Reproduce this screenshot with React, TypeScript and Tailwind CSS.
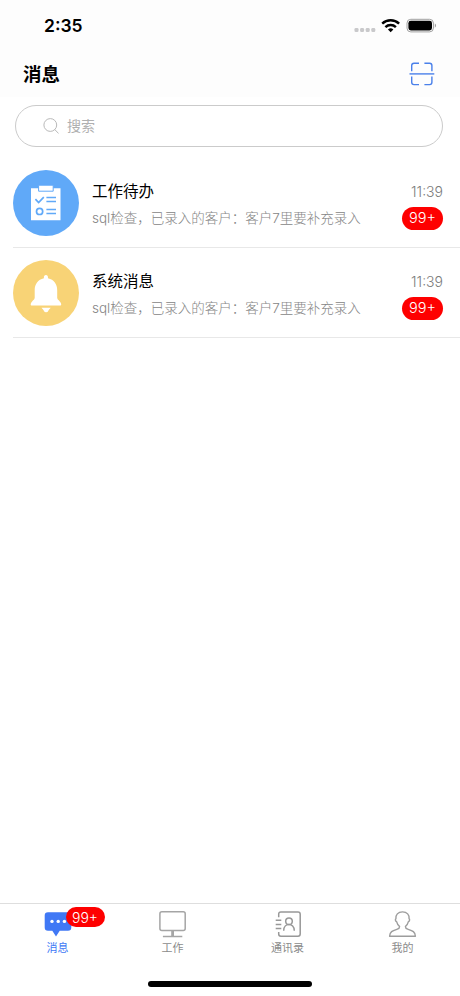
import { useState } from "react";

type Message = {
  id: number;
  title: string;
  content: string;
  time: string;
  unread: number;
  type: "todo" | "system";
};

const messages: Message[] = [
  {
    id: 1,
    title: "工作待办",
    content: "sql检查，已录入的客户：客户7里要补充录入",
    time: "11:39",
    unread: 120,
    type: "todo",
  },
  {
    id: 2,
    title: "系统消息",
    content: "sql检查，已录入的客户：客户7里要补充录入",
    time: "11:39",
    unread: 120,
    type: "system",
  },
];

const tabs = [
  { key: "message", label: "消息", icon: ChatIcon },
  { key: "work", label: "工作", icon: MonitorIcon },
  { key: "contacts", label: "通讯录", icon: ContactsIcon },
  { key: "mine", label: "我的", icon: PersonIcon },
];

function formatCount(n: number) {
  return n > 99 ? "99+" : String(n);
}

function StatusIcons() {
  return (
    <svg width="84" height="16" viewBox="0 0 84 16">
      <g fill="#c9c9cb">
        <rect x="1.5" y="10" width="4" height="4" rx="1.3" />
        <rect x="7.1" y="10" width="4" height="4" rx="1.3" />
        <rect x="12.7" y="10" width="4" height="4" rx="1.3" />
        <rect x="18.3" y="10" width="4" height="4" rx="1.3" />
      </g>
      <g fill="none" stroke="#000" strokeWidth="2.4">
        <path d="M29.2 5.7a12.2 12.2 0 0 1 16.9 0" />
        <path d="M32.4 9.2a7.5 7.5 0 0 1 10.5 0" />
      </g>
      <path d="M37.65 14.3l-2.7-2.8a3.9 3.9 0 0 1 5.4 0z" />
      <rect x="54" y="1.3" width="26.4" height="12.6" rx="3.8" fill="none" stroke="#a0a0a0" />
      <rect x="55.4" y="2.8" width="23.6" height="9.6" rx="2.4" />
      <path d="M81.8 5.5c1.7.6 1.7 3.6 0 4.2z" fill="#a0a0a0" />
    </svg>
  );
}

function ScanIcon() {
  return (
    <svg width="26" height="24" viewBox="0 0 26 24" fill="none" stroke="#4a80ea" strokeWidth="1.4">
      <path d="M10 1.2H5Q2.7 1.2 2.7 3.5V9.3M15.4 1.2h5.2q2.3 0 2.3 2.3v5.8M10 22.6H5q-2.3 0-2.3-2.3v-5.8M15.4 22.6h5.2q2.3 0 2.3-2.3v-5.8" />
      <path d="M.5 11.9h24.8" />
    </svg>
  );
}

function SearchIcon() {
  return (
    <svg width="16" height="17" viewBox="0 0 16 17" fill="none" stroke="#b9b9b9">
      <circle cx="7.3" cy="7" r="6.4" />
      <path d="M11.9 11.7l3.4 3.5" strokeLinecap="round" />
    </svg>
  );
}

function TodoIcon() {
  return (
    <svg width="66" height="66" viewBox="0 0 66 66">
      <path d="M18 18.2h29.5v32H18z" fill="#fff" />
      <path d="M25.6 15.2h14.6v6H25.6z" fill="#fff" stroke="#60a9f8" strokeWidth="1" />
      <g fill="none" stroke="#60a9f8" strokeWidth="1.7">
        <path d="M22.4 29.2l3.2 3.3 5.2-5.4" />
        <circle cx="26.6" cy="41.4" r="3.1" />
        <path d="M33.4 27.5H43M33.4 31.5H43M33.4 39.5H43M33.4 43.5H43" />
      </g>
    </svg>
  );
}

function BellIcon() {
  return (
    <svg width="66" height="66" viewBox="0 0 66 66" fill="#fff">
      <path d="M30.9 18.2c-.6-4.2 4.6-4.2 4.1 0C41 19.500 44.200 24.300 44.200 30.200v7.600c0 2.400 4 3.600 4 6.800 0 .7-.4 1-1 1H18.700c-.6 0-1-.3-1-1 0-3.200 4-4.400 4-6.800v-7.600c0-5.900 3.200-10.700 9.200-12z" />
      <path d="M28.500 47.700h9.200c-.6 1-2.200 2-2.500 3.400q-.4 1.200-2.100 1.200t-2.100-1.200c-.3-1.400-1.900-2.400-2.500-3.400z" />
    </svg>
  );
}

function ChatIcon() {
  return (
    <svg width="30" height="28" viewBox="0 0 30 28">
      <path
        d="M5 2.200h20a3.300 3.300 0 0 1 3.300 3.300v11.900a3.300 3.300 0 0 1-3.300 3.300h-8.300l-3.700 5.800-3.700-5.800H5a3.300 3.300 0 0 1-3.300-3.300V5.500a3.300 3.300 0 0 1 3.300-3.300z"
        fill="#4078f5"
      />
      <g fill="#fff">
        <circle cx="9" cy="11.400" r="1.700" />
        <circle cx="15.200" cy="11.400" r="1.700" />
        <circle cx="21.400" cy="11.400" r="1.700" />
      </g>
    </svg>
  );
}

function MonitorIcon() {
  return (
    <svg width="30" height="28" viewBox="0 0 30 28" fill="none" stroke="#a5a5a5" strokeWidth="1.500">
      <rect x="1.900" y="1.700" width="25.300" height="18.800" rx="2" />
      <path d="M14.600 20.500v6" strokeWidth="2.800" />
      <path d="M4.900 26.500h19.400" />
    </svg>
  );
}

function ContactsIcon() {
  return (
    <svg width="30" height="28" viewBox="0 0 30 28" fill="none" stroke="#989898" strokeWidth="1.500">
      <path d="M5.700 7.200V4.200q0-2.200 2.200-2.200H25q2.200 0 2.200 2.200v19.900q0 2.200-2.200 2.200H7.900q-2.200 0-2.200-2.200v-2" />
      <path d="M2.700 10.200h5.600M2.700 14.400h5.600M2.700 18.600h5.600" />
      <circle cx="16" cy="11.300" r="3.300" />
      <path d="M10.700 20.700c0-8.200 10.600-8.200 10.600 0" />
    </svg>
  );
}

function PersonIcon() {
  return (
    <svg width="30" height="28" viewBox="0 0 30 28" fill="none" stroke="#9d9d9d" strokeWidth="1.400" strokeLinejoin="round">
      <path d="M14.500 1.900c-4.600 0-7 3-6.600 6.800-1 .6-.4 2.500.7 3 .5 2.300 1.500 3.500 3 4.800 0 1.600-.8 2.200-2.300 2.700-4.600 1.500-7.600 2.300-7.700 7.100h25.800c-.1-4.800-3.100-5.600-7.700-7.100-1.500-.5-2.300-1.100-2.300-2.700 1.500-1.300 2.500-2.500 3-4.800 1.100-.5 1.700-2.400.7-3C21.500 4.900 19.100 1.900 14.500 1.900z" />
    </svg>
  );
}

export default function App() {
  const [active, setActive] = useState("message");
  const [search, setSearch] = useState("");

  const filtered = messages.filter(
    (m) => m.title.includes(search) || m.content.includes(search)
  );
  const unread = messages.reduce((sum, m) => sum + m.unread, 0);

  return (
    <div className="flex h-screen flex-col bg-white font-['Inter','Noto_Sans_CJK_SC',sans-serif]">
      {/* Header */}
      <header className="h-[97px] shrink-0 bg-[#fdfdfd]">
        <div className="flex h-[51px] items-center justify-between pr-[23px] pl-[44px]">
          <span className="pt-px text-[17.5px] font-semibold text-black">2:35</span>
          <StatusIcons />
        </div>
        <div className="flex h-[46px] items-center justify-between pr-[25px] pl-[23px]">
          <h1 className="pt-px text-[18.5px] font-bold text-black">消息</h1>
          <button type="button">
            <ScanIcon />
          </button>
        </div>
      </header>

      {/* Search */}
      <div className="mt-2 mr-[17px] ml-[15px] flex h-[42px] shrink-0 items-center gap-2 rounded-full border border-[#cbcbcb] pl-[27px]">
        <SearchIcon />
        <input
          type="text"
          placeholder="搜索"
          value={search}
          onChange={(e) => setSearch(e.target.value)}
          className="min-w-0 flex-1 bg-transparent pb-px text-[14px] text-gray-800 placeholder-[#b0b0b0] focus:outline-none"
        />
      </div>

      {/* Message list */}
      <main className="mt-[11px] flex-1">
        {filtered.map((m) => (
          <div
            key={m.id}
            className="ml-[13px] flex h-[90px] items-center border-b border-[#e8e8e8] pr-[17px]"
          >
            <div
              className={
                m.type === "todo"
                  ? "size-[66px] shrink-0 rounded-full bg-[#60a9f8]"
                  : "size-[66px] shrink-0 rounded-full bg-[#f8d376]"
              }
            >
              {m.type === "todo" ? <TodoIcon /> : <BellIcon />}
            </div>

            <div className="ml-[13px] flex-1 pt-1 whitespace-nowrap">
              <p className="text-[15.5px] leading-[27px] text-black">{m.title}</p>
              <p className="text-[13.5px] leading-[27px] font-light text-[#858585]">{m.content}</p>
            </div>

            <div className="flex flex-col items-end gap-[5px] pt-[6px]">
              <span className="text-[14px] leading-5 font-light text-[#7c7c7c]">{m.time}</span>
              <span className="flex h-[23px] w-[41px] items-center justify-center rounded-full bg-[#fe0000] text-[14.5px] font-light text-white">
                {formatCount(m.unread)}
              </span>
            </div>
          </div>
        ))}
      </main>

      {/* Tab bar */}
      <nav className="flex h-[93px] shrink-0 flex-col items-center justify-between border-t border-[#dedede] pb-[9px]">
        <div className="flex w-full">
          {tabs.map((t) => (
            <button
              key={t.key}
              type="button"
              onClick={() => setActive(t.key)}
              className="flex flex-1 flex-col items-center pt-[6px]"
            >
              <span className="relative">
                <t.icon />
                {t.key === "message" && (
                  <span className="absolute -top-[3px] left-[23px] flex h-5 w-[39px] items-center justify-center rounded-full bg-[#fe0000] text-[14px] font-light text-white">
                    {formatCount(unread)}
                  </span>
                )}
              </span>
              <span
                className={
                  active === t.key
                    ? "pt-px text-[11px] leading-[18px] text-[#4078f5]"
                    : "pt-px text-[11px] leading-[18px] text-[#8b8b8b]"
                }
              >
                {t.label}
              </span>
            </button>
          ))}
        </div>
        <div className="h-[6px] w-[164px] rounded-full bg-black" />
      </nav>
    </div>
  );
}
